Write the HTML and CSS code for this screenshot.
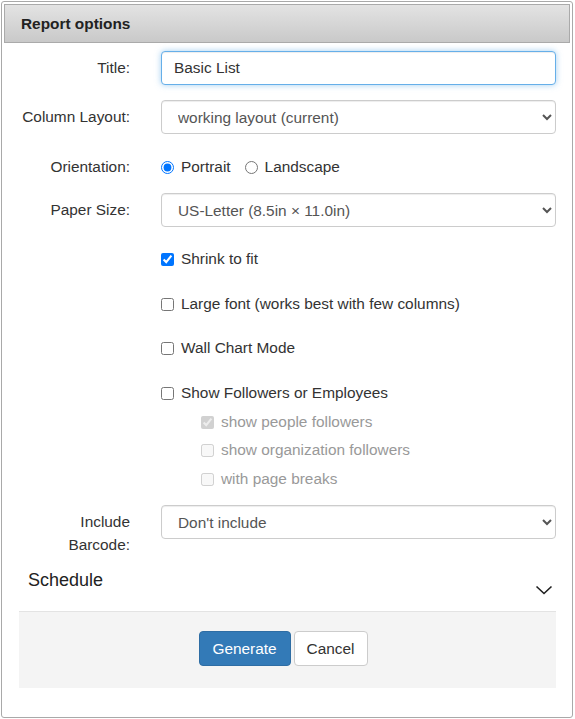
FILE: index.html
```html
<!DOCTYPE html>
<html lang="en">
<head>
<meta charset="utf-8">
<title>Report options</title>
<link rel="stylesheet" href="styles.css">
</head>
<body>
<div class="dialog">
  <div class="dlg-header">Report options</div>
  <div class="form">
    <div class="row r-title">
      <label class="lbl" for="t">Title:</label>
      <input id="t" class="field focused" type="text" value="Basic List">
    </div>
    <div class="row r-layout">
      <label class="lbl" for="cl">Column Layout:</label>
      <select id="cl" class="field sel"><option>working layout (current)</option></select>
    </div>
    <div class="row r-orient">
      <span class="lbl">Orientation:</span>
      <div class="radios">
        <label class="opt"><input type="radio" name="o" checked>Portrait</label>
        <label class="opt"><input type="radio" name="o">Landscape</label>
      </div>
    </div>
    <div class="row r-paper">
      <label class="lbl" for="ps">Paper Size:</label>
      <select id="ps" class="field sel"><option>US-Letter (8.5in × 11.0in)</option></select>
    </div>
    <div class="row chk c1"><span></span><label class="opt"><input type="checkbox" checked>Shrink to fit</label></div>
    <div class="row chk c2"><span></span><label class="opt"><input type="checkbox">Large font (works best with few columns)</label></div>
    <div class="row chk c3"><span></span><label class="opt"><input type="checkbox">Wall Chart Mode</label></div>
    <div class="row chk c4"><span></span><label class="opt"><input type="checkbox">Show Followers or Employees</label></div>
    <div class="row chk sub s1"><span></span><label class="opt dis"><input type="checkbox" checked disabled>show people followers</label></div>
    <div class="row chk sub s2"><span></span><label class="opt dis"><input type="checkbox" disabled>show organization followers</label></div>
    <div class="row chk sub s3"><span></span><label class="opt dis"><input type="checkbox" disabled>with page breaks</label></div>
    <div class="row r-barcode">
      <label class="lbl lbl-top" for="bc">Include Barcode:</label>
      <select id="bc" class="field sel"><option>Don't include</option></select>
    </div>
    <div class="schedule">
      <span class="sched-title">Schedule</span>
      <svg class="chev" width="18" height="10" viewBox="0 0 18 10"><polyline points="1.5,1.5 9,8.5 16.5,1.5" fill="none" stroke="#1e1e1e" stroke-width="1.6"/></svg>
    </div>
    <div class="footer">
      <button class="btn btn-primary" type="button">Generate</button>
      <button class="btn btn-default" type="button">Cancel</button>
    </div>
  </div>
</div>
</body>
</html>
```
FILE: styles.css
```css
html, body {
  margin: 0;
  padding: 0;
  background: #fff;
}
body {
  font-family: "Liberation Sans", Arial, sans-serif;
  font-size: 15.4px;
  color: #333;
}
.dialog {
  margin: 1px;
  width: 572px;
  height: 717px;
  box-sizing: border-box;
  border: 1px solid #a9a9a9;
  border-radius: 3px;
  padding: 2px;
}
.dlg-header {
  height: 37px;
  line-height: 37px;
  border: 1px solid #aaa;
  background: linear-gradient(#e3e3e3, #c9c9c9);
  padding-left: 16px;
  font-weight: bold;
  font-size: 15.4px;
  color: #222;
}
.form {
  padding: 0 14px 0 16px;
}
.row {
  display: grid;
  grid-template-columns: 110px 1fr;
  column-gap: 31px;
  align-items: center;
}
.lbl {
  text-align: right;
  color: #333;
}
.lbl-top {
  align-self: start;
  padding-top: 5px;
  line-height: 23px;
}
.field {
  box-sizing: border-box;
  height: 34px;
  width: 100%;
  border: 1px solid #ccc;
  border-radius: 4px;
  background: #fff;
  font-family: inherit;
  font-size: 15.4px;
  margin: 0;
  box-shadow: inset 0 1px 1px rgba(0,0,0,.075);
}
input.field {
  padding: 6px 12px;
  color: #333;
}
.focused {
  border-color: #66afe9;
  outline: 0;
  box-shadow: inset 0 1px 1px rgba(0,0,0,.075), 0 0 6px rgba(102,175,233,.6);
}
.sel {
  padding: 6px 8px 6px 12px;
  color: #555;
}
.r-title { margin-top: 8px; }
.r-layout { margin-top: 15px; }
.r-orient { margin-top: 23px; height: 20px; }
.r-paper { margin-top: 16px; }
.radios {
  display: flex;
  align-items: center;
  gap: 14px;
}
.opt {
  display: flex;
  align-items: center;
  gap: 7px;
  color: #333;
  white-space: nowrap;
}
.opt input {
  margin: 0;
  width: 13px;
  height: 13px;
}
.chk { height: 20px; }
.c1 { margin-top: 22px; }
.c2 { margin-top: 25px; }
.c3 { margin-top: 24px; }
.c4 { margin-top: 25px; }
.s1 { margin-top: 9px; }
.s2 { margin-top: 8px; }
.s3 { margin-top: 9px; }
.sub .opt { padding-left: 40px; }
.dis { color: #999; }
.r-barcode { margin-top: 16px; align-items: start; }
.schedule {
  margin-top: 12px;
  height: 24px;
  display: flex;
  justify-content: space-between;
  align-items: flex-end;
  padding: 0 3px 0 8px;
}
.sched-title {
  font-size: 18px;
  line-height: 24px;
  color: #222;
}
.chev {
  display: block;
  margin-bottom: -3px;
}
.footer {
  margin: 19px 0 0 -1px;
  height: 77px;
  box-sizing: border-box;
  border-top: 1px solid #e3e3e3;
  background: #f4f4f4;
  display: flex;
  justify-content: center;
  align-items: flex-start;
  gap: 3px;
  padding: 19px 9px 0 0;
}
.btn {
  height: 35px;
  border-radius: 4px;
  font-family: inherit;
  font-size: 15.4px;
  padding: 0;
  margin: 0;
  cursor: pointer;
}
.btn-primary {
  width: 92px;
  background: #337ab7;
  border: 1px solid #2e6da4;
  color: #fff;
}
.btn-default {
  width: 74px;
  background: #fff;
  border: 1px solid #ccc;
  color: #333;
}
```
